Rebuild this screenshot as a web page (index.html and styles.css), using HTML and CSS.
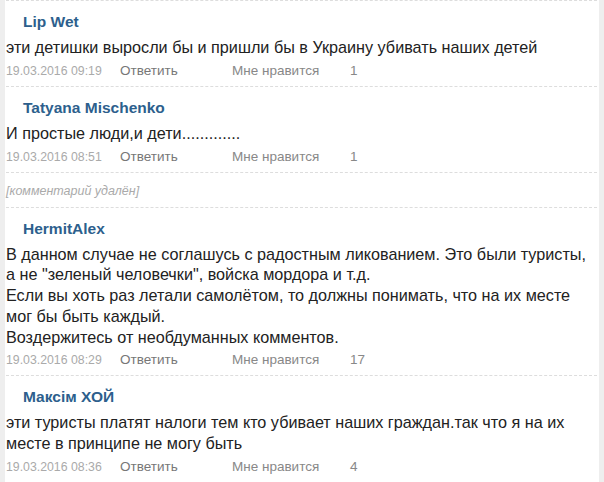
FILE: index.html
```html
<!DOCTYPE html>
<html lang="ru">
<head>
<meta charset="utf-8">
<link rel="stylesheet" href="styles.css">
</head>
<body>
<div class="page">
  <div class="comment">
    <div class="name">Lip Wet</div>
    <div class="text">эти детишки выросли бы и пришли бы в Украину убивать наших детей</div>
    <div class="meta"><span class="date">19.03.2016 09:19</span><span class="reply">Ответить</span><span class="like">Мне нравится</span><span class="count">1</span></div>
  </div>
  <div class="comment">
    <div class="name">Tatyana Mischenko</div>
    <div class="text">И простые люди,и дети.............</div>
    <div class="meta"><span class="date">19.03.2016 08:51</span><span class="reply">Ответить</span><span class="like">Мне нравится</span><span class="count">1</span></div>
  </div>
  <div class="comment deleted">[комментарий удалён]</div>
  <div class="comment">
    <div class="name">HermitAlex</div>
    <div class="text">В данном случае не соглашусь с радостным ликованием. Это были туристы, а не "зеленый человечки", войска мордора и т.д.<br>Если вы хоть раз летали самолётом, то должны понимать, что на их месте мог бы быть каждый.<br>Воздержитесь от необдуманных комментов.</div>
    <div class="meta"><span class="date">19.03.2016 08:29</span><span class="reply">Ответить</span><span class="like">Мне нравится</span><span class="count">17</span></div>
  </div>
  <div class="comment">
    <div class="name">Максім ХОЙ</div>
    <div class="text">эти туристы платят налоги тем кто убивает наших граждан.так что я на их месте в принципе не могу быть</div>
    <div class="meta"><span class="date">19.03.2016 08:36</span><span class="reply">Ответить</span><span class="like">Мне нравится</span><span class="count">4</span></div>
  </div>
</div>
</body>
</html>
```

FILE: styles.css
```css
html, body {
  margin: 0;
  padding: 0;
  background: #eeeeee;
  font-family: "Liberation Sans", Arial, sans-serif;
}
.page {
  margin: 0 5px;
  background: #ffffff;
  min-height: 482px;
  padding: 0 2px 0 1px;
}
.comment {
  border-top: 1px dashed #dddddd;
  padding: 11px 0 6px;
}
.name {
  font-size: 15.5px;
  font-weight: bold;
  line-height: 20px;
  color: #2d5f8d;
  padding-left: 17px;
}
.text {
  margin-top: 5px;
  font-size: 16.2px;
  line-height: 20.75px;
  color: #222222;
}
.meta {
  margin-top: 4px;
  display: grid;
  grid-template-columns: 114px 112px 118px auto;
  font-size: 13.5px;
  line-height: 18px;
}
.date { color: #aaaaaa; font-size: 12.3px; }
.reply { color: #777777; }
.like { color: #888888; }
.count { color: #888888; }
.deleted {
  padding: 10px 0 8px;
  font-size: 12.5px;
  line-height: 16px;
  font-style: italic;
  color: #aaaaaa;
}
```
